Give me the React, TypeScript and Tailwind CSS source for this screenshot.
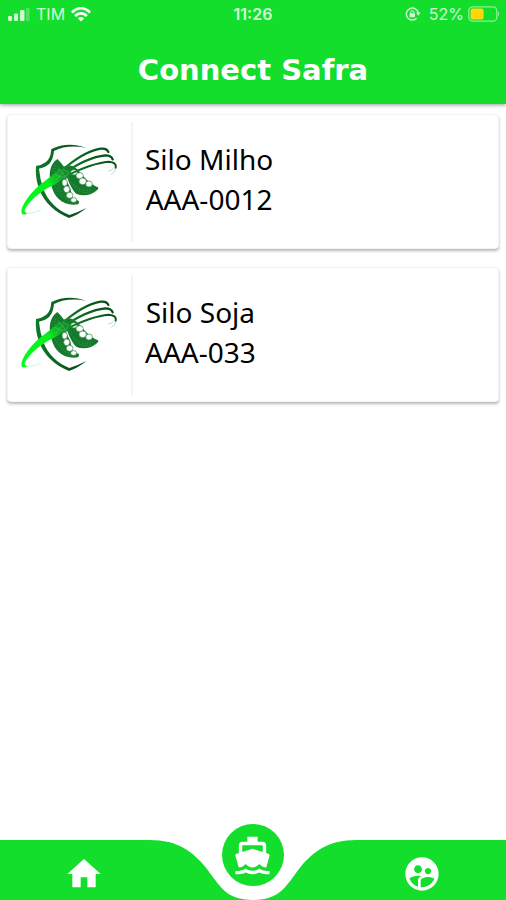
// App.tsx
// Connect Safra home screen: list of silos and the bottom navigation bar.

import { MdDirectionsBoat, MdHome, MdSupervisedUserCircle } from "react-icons/md";

interface Silo {
  name: string;
  code: string;
}

const silos: Silo[] = [
  { name: "Silo Milho", code: "AAA-0012" },
  { name: "Silo Soja", code: "AAA-033" },
];

function StatusBar() {
  return (
    <div className="grid h-7 grid-cols-3 items-center px-2 text-base text-white/80">
      <div className="flex items-center gap-1.5">
        <svg viewBox="0 0 22 13" className="h-[13px] w-[22px]" fill="currentColor">
          <rect x="0" y="8" width="4" height="5" rx="1" />
          <rect x="6" y="5.5" width="4" height="7.5" rx="1" />
          <rect x="12" y="2" width="4.5" height="11" rx="1" />
          <rect x="18" y="0" width="3.5" height="13" rx="1" opacity="0.3" />
        </svg>
        <span>TIM</span>
        <svg viewBox="0 0 20 15" className="h-[15px] w-5 text-white" fill="none" stroke="currentColor" strokeWidth="2.6">
          <path d="M1 5.6C6-.2 14-.2 19 5.6" />
          <path d="M4.2 9.2C7.4 5.4 12.6 5.4 15.8 9.2" />
          <path d="M10 14.6 6.9 11.4Q10 8.8 13.1 11.4Z" fill="currentColor" stroke="none" />
        </svg>
      </div>
      <span className="text-center font-semibold">11:26</span>
      <div className="-mr-0.5 flex items-center justify-end gap-1">
        <svg viewBox="0 0 16 14" className="mr-1 h-[14px] w-4" fill="none" stroke="currentColor">
          <path d="M13.3 6A6 6 0 1 0 11.6 11.3" strokeWidth="1.5" />
          <path d="M11 5.5h4.6L13.3 8.8Z" fill="currentColor" stroke="none" />
          <rect x="4.6" y="6.2" width="5.4" height="4" rx="0.6" fill="currentColor" stroke="none" />
          <path d="M5.7 6.5V5.3a1.6 1.6 0 0 1 3.2 0v1.2" strokeWidth="1" />
        </svg>
        <span>52%</span>
        <svg viewBox="0 0 32 16" className="h-4 w-8">
          <rect x="0.8" y="0.8" width="28" height="14.4" rx="4" fill="none" stroke="currentColor" strokeOpacity="0.65" strokeWidth="1.3" />
          <rect x="2.6" y="2.6" width="13" height="10.8" rx="2" fill="#ffd60a" />
          <path d="M30 5.2q2 2.6 0 5.2Z" fill="currentColor" opacity="0.7" />
        </svg>
      </div>
    </div>
  );
}

// Shield with two open pods and the sweep that crosses them
function SafraLogo() {
  return (
    <svg viewBox="0 0 345 270" className="h-[90px] w-[115px]" role="img" aria-label="Connect Safra">
      <defs>
        <linearGradient id="sweep" gradientUnits="userSpaceOnUse" x1="40" y1="230" x2="300" y2="50">
          <stop offset="0" stopColor="#00ff1a" />
          <stop offset="0.35" stopColor="#08ef1d" />
          <stop offset="0.5" stopColor="#139a2b" />
          <stop offset="0.7" stopColor="#0c6a21" />
          <stop offset="1" stopColor="#064f16" />
        </linearGradient>
        <linearGradient id="shieldTop" x1="0" y1="0" x2="1" y2="0">
          <stop offset="0" stopColor="#0e7a29" />
          <stop offset="1" stopColor="#06461a" />
        </linearGradient>
      </defs>

      <path
        d="M228 38C190 24 155 27 124 42Q122 72 107 82Q95 91 78 93C76 120 80 140 88 163C102 204 138 234 177 249Q204 240 229 219Q206 231 178 240C143 226 113 198 100 162Q90 134 87 101Q108 96 118 86Q129 75 132 48C160 34 190 32 228 38Z"
        fill="url(#shieldTop)"
      />

      <path d="M142 72C118 88 115 120 124 151C133 190 160 214 204 208C210 203 207 197 202 196L188 190C182 168 178 146 176 120Q160 88 142 72Z" fill="#157a2d" />
      <path d="M152 100C175 86 190 91 207 108C222 126 240 148 264 157C267 161 263 165 258 168C242 182 218 184 199 176C180 166 164 140 152 100Z" fill="#157a2d" />

      {/* Gap between the pods */}
      <path d="M170 130Q180 160 198 180" fill="none" stroke="#fff" strokeWidth="4" />

      <g fill="#fff" stroke="#2a8a3b" strokeWidth="2">
        <ellipse cx="164" cy="143" rx="8" ry="10" />
        <ellipse cx="170" cy="163" rx="9" ry="10" />
        <ellipse cx="179" cy="181" rx="10" ry="9" />
        <ellipse cx="191" cy="195" rx="9" ry="7" />
        <ellipse cx="192" cy="112" rx="10" ry="8" />
        <ellipse cx="209" cy="122" rx="11" ry="9" />
        <ellipse cx="218" cy="139" rx="11" ry="10" />
        <ellipse cx="237" cy="147" rx="10" ry="9" />
      </g>

      <g fill="none" stroke="#55b85f" strokeWidth="1.5" strokeDasharray="3 5">
        <path d="M137 92C128 130 148 172 178 197" />
        <path d="M129 100C124 150 148 188 188 203" />
        <path d="M176 126C184 152 213 172 247 164" />
        <path d="M190 150C200 168 220 176 243 171" />
      </g>

      {/* Tail of the sweep, then the three strands */}
      <path
        d="M36 236C28 222 51 188 76 162C99 140 126 126 148 100L178 112C160 138 130 150 105 164C77 181 52 207 43 226Q43 232 52 236Q41 241 36 236Z"
        fill="url(#sweep)"
      />
      <g fill="none" stroke="url(#sweep)" strokeWidth="7" strokeLinecap="round">
        <path d="M152 110C190 76 234 47 272 41Q291 39 295 51" />
        <path d="M160 116C200 88 246 65 286 61Q304 61 308 73" />
        <path d="M168 123C212 101 258 83 296 80Q321 82 317 98" strokeWidth="6" />
      </g>
      <path d="M49 235Q72 235 94 225" fill="none" stroke="#90f598" strokeWidth="1.5" />
      <path d="M318 98Q315 111 304 119M311 99Q306 107 295 108" fill="none" stroke="#8faf94" strokeWidth="1.5" />
      <g fill="none" stroke="#8fd896" strokeWidth="1">
        <path d="M143 102L158 112L147 125L166 128L177 112L159 103" />
        <path d="M135 118L148 125L137 136M158 112L166 128" />
      </g>
    </svg>
  );
}

function SiloCard({ silo }: { silo: Silo }) {
  return (
    <a
      href="#silo"
      className="flex h-[135px] items-center rounded-sm border border-gray-100 bg-white shadow-[0_2px_3px_rgba(0,0,0,0.28)]"
    >
      <div className="flex h-[120px] w-[125px] items-center border-r-2 border-gray-100 pb-1 pl-0.5">
        <SafraLogo />
      </div>
      <div className="ml-3 pb-1.5 text-center font-['Noto_Sans',sans-serif] text-[28px] leading-10 text-black">
        <h2>{silo.name}</h2>
        <p>{silo.code}</p>
      </div>
    </a>
  );
}

function BottomNav() {
  return (
    <nav className="relative h-[60px] text-white">
      {/* Green bar with the dip under the active tab */}
      <div className="absolute inset-0 flex">
        <div className="flex-1 bg-[#12de2b]" />
        <svg viewBox="0 0 206 60" className="h-[60px] w-[206px] text-[#12de2b]" fill="currentColor">
          <path d="M0 0C27 0 43 11 57 29C70 46 76 60 103 60C130 60 136 46 149 29C163 11 179 0 206 0V60H0Z" />
        </svg>
        <div className="flex-1 bg-[#12de2b]" />
      </div>

      <div className="relative grid h-full grid-cols-3 justify-items-center">
        <button type="button" aria-label="Início" className="pt-2">
          <MdHome size={40} />
        </button>
        <button
          type="button"
          aria-label="Embarques"
          className="-mt-4 flex h-[62px] w-[62px] items-center justify-center rounded-full bg-[#12de2b]"
        >
          <MdDirectionsBoat size={41} />
        </button>
        <button type="button" aria-label="Usuários" className="pt-2">
          <MdSupervisedUserCircle size={40} />
        </button>
      </div>
    </nav>
  );
}

export default function App() {
  return (
    <div className="flex min-h-screen flex-col bg-white font-[Inter,sans-serif]">
      <header className="bg-[#12de2b] shadow-[0_1px_4px_rgba(0,0,0,0.4)]">
        <StatusBar />
        <h1 className="pt-6 pb-4 text-center font-['DejaVu_Sans',sans-serif] text-[29px] leading-9 font-bold text-white">
          Connect Safra
        </h1>
      </header>

      <main className="flex flex-1 flex-col gap-[18px] px-[7px] pt-[10px]">
        {silos.map((silo) => (
          <SiloCard key={silo.code} silo={silo} />
        ))}
      </main>

      <BottomNav />
    </div>
  );
}
